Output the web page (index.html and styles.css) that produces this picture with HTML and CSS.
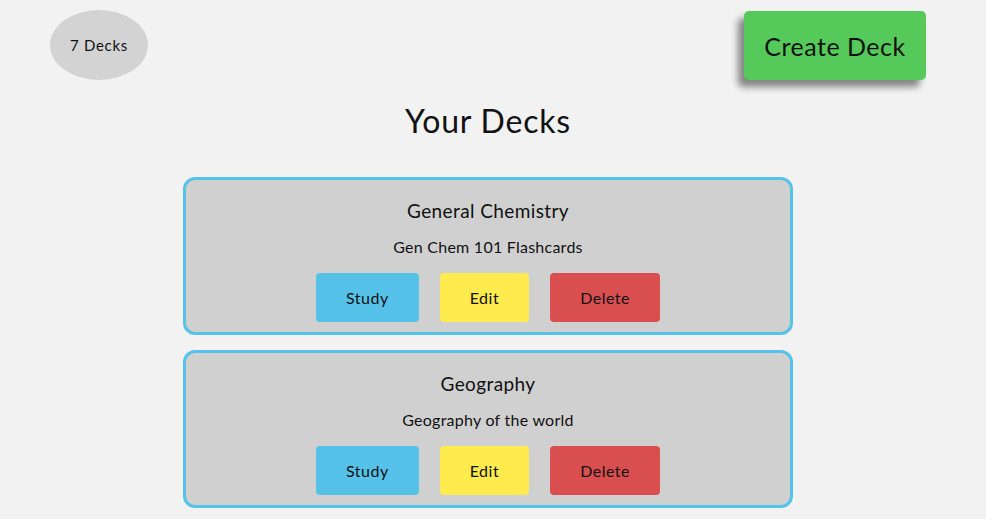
FILE: index.html
```html
<!DOCTYPE html>
<html>
<head>
<meta charset="utf-8">
<link rel="stylesheet" href="styles.css">
</head>
<body>
<div class="page">
  <header class="top">
    <div class="count">7 Decks</div>
    <button class="create">Create Deck</button>
  </header>
  <h1 class="title">Your Decks</h1>
  <div class="decks">
    <div class="deck">
      <h2 class="deck-name">General Chemistry</h2>
      <p class="deck-desc">Gen Chem 101 Flashcards</p>
      <div class="actions">
        <button class="btn study">Study</button>
        <button class="btn edit">Edit</button>
        <button class="btn delete">Delete</button>
      </div>
    </div>
    <div class="deck">
      <h2 class="deck-name">Geography</h2>
      <p class="deck-desc">Geography of the world</p>
      <div class="actions">
        <button class="btn study">Study</button>
        <button class="btn edit">Edit</button>
        <button class="btn delete">Delete</button>
      </div>
    </div>
  </div>
</div>
</body>
</html>
```
FILE: styles.css
```css
html, body {
  margin: 0;
  padding: 0;
  background: #f2f2f2;
  height: 100%;
  overflow: hidden;
}
body {
  font-family: "Lato", "Open Sans", sans-serif;
  color: #111;
}
.page {
  padding-right: 10px;
}
.top {
  display: flex;
  justify-content: space-between;
  align-items: flex-start;
  padding: 10px 50px 0 50px;
}
.count {
  width: 98px;
  height: 70px;
  border-radius: 50%;
  background: #d3d3d3;
  display: flex;
  align-items: center;
  justify-content: center;
  font-size: 15px;
  letter-spacing: 0.7px;
}
.create {
  margin-top: 1px;
  width: 182px;
  height: 69px;
  border: none;
  border-radius: 5px;
  background: #55c95a;
  font-family: inherit;
  font-size: 25px;
  letter-spacing: 0.5px;
  color: #111;
  box-shadow: -6px 7px 7px rgba(0, 0, 0, 0.45);
}
.title {
  margin: 21px 0 0;
  text-align: center;
  font-weight: 400;
  font-size: 32px;
  letter-spacing: 0.8px;
  line-height: 40px;
}
.decks {
  width: 610px;
  margin: 36px auto 0;
  display: flex;
  flex-direction: column;
  gap: 15px;
}
.deck {
  box-sizing: border-box;
  height: 158px;
  border: 3px solid #56c2ea;
  border-radius: 12px;
  background: #d0d0d0;
  display: flex;
  flex-direction: column;
  align-items: center;
  padding-top: 19px;
}
.deck-name {
  margin: 0;
  font-weight: 400;
  font-size: 19px;
  letter-spacing: 0.4px;
  line-height: 24px;
}
.deck-desc {
  margin: 14px 0 0;
  font-size: 16px;
  letter-spacing: 0.25px;
  line-height: 20px;
}
.actions {
  display: flex;
  gap: 21px;
  margin-top: 16px;
}
.btn {
  height: 49px;
  padding: 0 30px;
  border: none;
  border-radius: 4px;
  font-family: inherit;
  font-size: 16px;
  letter-spacing: 0.5px;
  color: #111;
}
.study { background: #56c2ea; }
.edit { background: #ffeb4e; }
.delete { background: #d94f50; }
```
